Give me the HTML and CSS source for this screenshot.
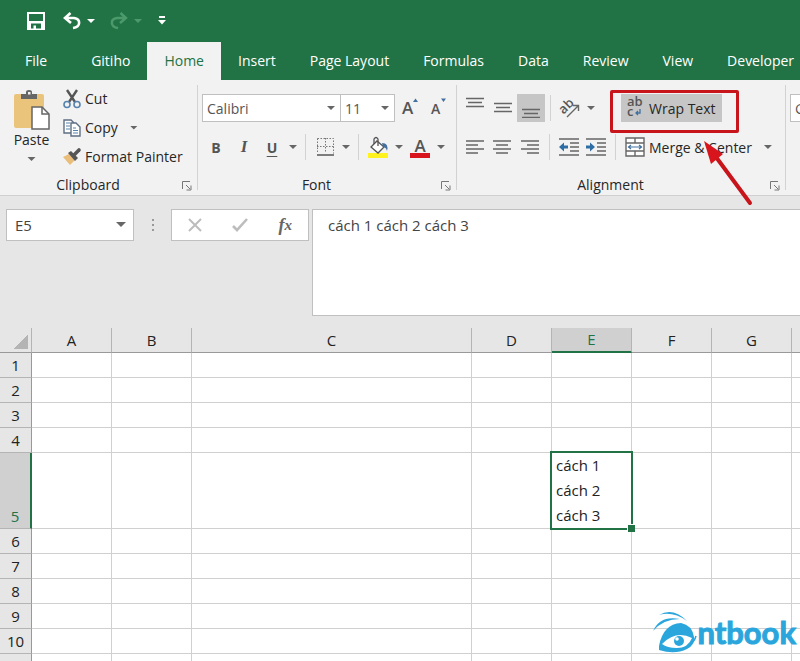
FILE: index.html
```html
<!DOCTYPE html>
<html lang="vi">
<head>
    <meta charset="UTF-8">
    <meta name="viewport" content="width=device-width, initial-scale=1.0">
    <title>Wrap Text</title>
    <link rel="stylesheet" href="styles.css">
</head>
<body>
    <div class="app">
        <header class="header">
            <div class="quick-access">
                <button class="qa-btn" aria-label="Save">
                    <svg width="18" height="18" viewBox="0 0 18 18"><path d="M0 0h18v18H0zM2 2v7h14V2zM4 11.500v5h2.500v-3H9v3h5v-5z" fill="#fff" fill-rule="evenodd"/></svg>
                </button>
                <button class="qa-btn undo" aria-label="Undo">
                    <svg width="18" height="18" viewBox="0 0 18 18"><path d="M7.500 1L2 6l6 5M2 6h9c7 1 7 9-1 10" fill="none" stroke="#fff" stroke-width="2.600"/></svg>
                </button>
                <span class="arrow light"></span>
                <button class="qa-btn redo" aria-label="Redo">
                    <svg width="18" height="18" viewBox="0 0 18 18"><path d="M10.500 1L16 6l-6 5M16 6H7C0 7 0 15 8 16" fill="none" stroke="#4c9a6c" stroke-width="2.400"/></svg>
                </button>
                <span class="arrow faded"></span>
                <button class="qa-btn more" aria-label="Customize">
                    <svg width="8" height="10" viewBox="0 0 8 10"><path d="M1 0h6v2H1zM0 4h8L4 8.500z" fill="#fff"/></svg>
                </button>
            </div>
            <nav class="tabs">
                <a href="#" class="tab file">File</a>
                <a href="#" class="tab">Gitiho</a>
                <a href="#" class="tab active">Home</a>
                <a href="#" class="tab">Insert</a>
                <a href="#" class="tab">Page Layout</a>
                <a href="#" class="tab">Formulas</a>
                <a href="#" class="tab">Data</a>
                <a href="#" class="tab">Review</a>
                <a href="#" class="tab">View</a>
                <a href="#" class="tab">Developer</a>
            </nav>
        </header>

        <div class="ribbon">
            <section class="group clipboard">
                <div class="clipboard-tools">
                    <button class="paste">
                        <svg width="36" height="40" viewBox="0 0 36 40">
                            <rect x="0" y="4" width="30" height="34" rx="2" fill="#ebc47c"/>
                            <path d="M7 4h5V2q0-2 3-2t3 2v2h5v5H7z" fill="#666"/><rect x="14" y="2" width="2.500" height="2.500" fill="#f2f2f2"/>
                            <path d="M18 17h10l7 7v15H18z" fill="#fff" stroke="#666" stroke-width="1.500"/><path d="M28 17v7h7" fill="none" stroke="#666" stroke-width="1.500"/>
                        </svg>
                        <span>Paste</span>
                        <span class="arrow"></span>
                    </button>
                    <div class="clipboard-list">
                        <button class="text-btn">
                            <svg width="18" height="20" viewBox="0 0 18 20"><path d="M4 1l8 12M14 1L6 13" stroke="#555" stroke-width="2.400" fill="none"/><g fill="none" stroke="#5682b0" stroke-width="1.600"><circle cx="4" cy="15.500" r="3"/><circle cx="14" cy="15.500" r="3"/></g></svg>
                            Cut
                        </button>
                        <button class="text-btn">
                            <svg width="18" height="20" viewBox="0 0 18 20"><g fill="#fff" stroke="#5f6f82" stroke-width="1.400"><path d="M9 15H1V2h7l3 3"/><path d="M8 5h5l4 4v9H8z"/></g><path d="M3 5h4M3 8h4M3 11h4M10 10h3M10 12.500h5M10 15h5" stroke="#5682b0" stroke-width="1.200"/></svg>
                            Copy
                            <span class="arrow"></span>
                        </button>
                        <button class="text-btn">
                            <svg width="18" height="20" viewBox="0 0 18 20"><path d="M0 10l6-3 6 6-5 5z" fill="#ebbd7b"/><path d="M5 6l3-2 7 7-3 3z" fill="#555"/><path d="M11 8l5-5" stroke="#555" stroke-width="3.600" stroke-linecap="round"/></svg>
                            Format Painter
                        </button>
                    </div>
                </div>
                <div class="group-label">Clipboard<button class="launcher" aria-label="Clipboard settings"><svg width="10" height="10" viewBox="0 0 10 10"><path d="M.5 8V.5H8M4 4l4 4M9 4.500V9H4.500" fill="none" stroke="#777"/></svg></button></div>
            </section>

            <section class="group font">
                <div class="tools">
                    <div class="tool-row">
                        <span class="combo family"><select aria-label="Font"><option>Calibri</option></select></span>
                        <span class="combo size"><select aria-label="Font size"><option>11</option></select></span>
                        <button class="icon-btn" aria-label="Increase font size"><svg width="18" height="20" viewBox="0 0 18 20"><text x="2" y="16" class="glyph big">A</text><path d="M13 4l2.500-3.500L18 4z" fill="#40709f"/></svg></button>
                        <button class="icon-btn" aria-label="Decrease font size"><svg width="18" height="20" viewBox="0 0 18 20"><text x="3" y="16" class="glyph small">A</text><path d="M13 .5h5L15.500 4z" fill="#40709f"/></svg></button>
                    </div>
                    <div class="tool-row">
                        <button class="icon-btn bold">B</button>
                        <button class="icon-btn italic">I</button>
                        <button class="icon-btn underline">U</button>
                        <span class="arrow"></span>
                        <span class="sep"></span>
                        <button class="icon-btn" aria-label="Borders"><svg width="17" height="18" viewBox="0 0 17 18"><path d="M.5 .5h16v15M.5 .5v15M8.500 0v15M0 8.500h17" fill="none" stroke="#777" stroke-dasharray="1.500 1.500"/><path d="M0 17h17" stroke="#555" stroke-width="1.500"/></svg></button>
                        <span class="arrow"></span>
                        <span class="sep"></span>
                        <button class="icon-btn" aria-label="Fill color"><svg width="20" height="21" viewBox="0 0 20 21"><rect y="16" width="20" height="5" fill="#fff21f"/><path d="M9 4l7 6-6 6-7-6z" fill="#fff" stroke="#555" stroke-width="1.300"/><path d="M6 7V2q2-3 4 0v7" fill="none" stroke="#555" stroke-width="1.300"/><path d="M14 6q7 0 5 8-1-4-4-4z" fill="#40709f"/></svg></button>
                        <span class="arrow"></span>
                        <button class="icon-btn" aria-label="Font color"><svg width="20" height="21" viewBox="0 0 20 21"><rect y="16" width="20" height="5" fill="#d8141c"/><text x="10" y="15" class="glyph color">A</text></svg></button>
                        <span class="arrow"></span>
                    </div>
                </div>
                <div class="group-label">Font<button class="launcher" aria-label="Font settings"><svg width="10" height="10" viewBox="0 0 10 10"><path d="M.5 8V.5H8M4 4l4 4M9 4.500V9H4.500" fill="none" stroke="#777"/></svg></button></div>
            </section>

            <section class="group alignment">
                <div class="align-tools">
                    <div class="tools">
                        <div class="tool-row">
                            <button class="icon-btn" aria-label="Top align"><svg width="18" height="20" viewBox="0 0 18 20"><path d="M0 .5h18M2 4.500h14M0 8.500h18" stroke="#666" stroke-width="1.300"/></svg></button>
                            <button class="icon-btn" aria-label="Middle align"><svg width="18" height="20" viewBox="0 0 18 20"><path d="M0 5.500h18M2 9.500h14M0 13.500h18" stroke="#666" stroke-width="1.300"/></svg></button>
                            <button class="icon-btn pressed" aria-label="Bottom align"><svg width="18" height="20" viewBox="0 0 18 20"><path d="M0 11.500h18M2 15.500h14M0 19.300h18" stroke="#666" stroke-width="1.300"/></svg></button>
                            <span class="sep"></span>
                            <button class="icon-btn" aria-label="Orientation"><svg width="22" height="22" viewBox="0 0 22 22"><text x="1" y="15" transform="rotate(-45 6 12)" class="glyph angled">ab</text><path d="M8 20L19 9M14 8.500h5.500V14" fill="none" stroke="#666" stroke-width="1.400"/></svg></button>
                            <span class="arrow"></span>
                        </div>
                        <div class="tool-row">
                            <button class="icon-btn" aria-label="Align left"><svg width="18" height="14" viewBox="0 0 18 14"><path d="M0 1h18M0 5h12M0 9h18M0 13h12" stroke="#666" stroke-width="1.300"/></svg></button>
                            <button class="icon-btn" aria-label="Center"><svg width="18" height="14" viewBox="0 0 18 14"><path d="M0 1h18M3 5h12M0 9h18M3 13h12" stroke="#666" stroke-width="1.300"/></svg></button>
                            <button class="icon-btn" aria-label="Align right"><svg width="18" height="14" viewBox="0 0 18 14"><path d="M0 1h18M6 5h12M0 9h18M6 13h12" stroke="#666" stroke-width="1.300"/></svg></button>
                            <span class="sep"></span>
                            <button class="icon-btn" aria-label="Decrease indent"><svg width="20" height="18" viewBox="0 0 20 18"><path d="M0 1h20M11 5h9M11 9h9M11 13h9M0 17h20" stroke="#666" stroke-width="1.300"/><path d="M0 9l5-4.500V7.500h4v3H5v3z" fill="#2e6da4"/></svg></button>
                            <button class="icon-btn" aria-label="Increase indent"><svg width="20" height="18" viewBox="0 0 20 18"><path d="M0 1h20M11 5h9M11 9h9M11 13h9M0 17h20" stroke="#666" stroke-width="1.300"/><path d="M9 9L4 4.500V7.500H0v3h4v3z" fill="#2e6da4"/></svg></button>
                            <span class="sep"></span>
                        </div>
                    </div>
                    <div class="tools">
                        <div class="tool-row wrap">
                            <button class="text-btn pressed">
                                <svg width="20" height="22" viewBox="0 0 20 22"><text x="2" y="9" class="glyph wrap-ab">ab</text><text x="2" y="19" class="glyph wrap-ab">c</text><path d="M15 12v4h-4M13 14l-2 2 2 2" fill="none" stroke="#40709f" stroke-width="1.300"/></svg>
                                Wrap Text
                            </button>
                            <span class="highlight"></span>
                            <svg class="pointer" width="52" height="68" viewBox="0 0 52 68"><path d="M48 63L14 17" stroke="#c8141b" stroke-width="4" stroke-linecap="round"/><path d="M2 1l19 13-12 10z" fill="#d8141c"/></svg>
                        </div>
                        <div class="tool-row">
                            <button class="text-btn">
                                <svg width="20" height="20" viewBox="0 0 20 20"><path d="M1 1h18v18H1zM1 6h18M1 14h18M10 1v5M10 14v5" fill="#fff" stroke="#666" stroke-width="1.400"/><path d="M3 10h14M6 8l-2.500 2L6 12M14 8l2.500 2L14 12" fill="none" stroke="#40709f" stroke-width="1.200"/></svg>
                                Merge &amp; Center
                                <span class="arrow"></span>
                            </button>
                        </div>
                    </div>
                </div>
                <div class="group-label">Alignment<button class="launcher" aria-label="Alignment settings"><svg width="10" height="10" viewBox="0 0 10 10"><path d="M.5 8V.5H8M4 4l4 4M9 4.500V9H4.500" fill="none" stroke="#777"/></svg></button></div>
            </section>

            <section class="group number">
                <span class="combo family"><select aria-label="Number format"><option>General</option></select></span>
            </section>
        </div>

        <div class="formula-bar">
            <label class="name-box"><input type="text" value="E5" aria-label="Name box"></label>
            <span class="dots"><i></i><i></i><i></i></span>
            <div class="formula-buttons">
                <button aria-label="Cancel"><svg width="14" height="14" viewBox="0 0 14 14"><path d="M1 1l12 12M13 1L1 13" stroke="#bdbdbd" stroke-width="2"/></svg></button>
                <button aria-label="Enter"><svg width="16" height="14" viewBox="0 0 16 14"><path d="M1 8l4 4L15 1" fill="none" stroke="#bdbdbd" stroke-width="2.600"/></svg></button>
                <button class="fx" aria-label="Insert function">f<sub>x</sub></button>
            </div>
            <textarea class="formula" aria-label="Formula">cách 1 cách 2 cách 3</textarea>
        </div>

        <main class="sheet">
            <table>
                <colgroup><col class="row-col"><col><col><col class="wide"><col><col><col><col><col></colgroup>
                <thead>
                    <tr><th class="corner"></th><th>A</th><th>B</th><th>C</th><th>D</th><th class="selected">E</th><th>F</th><th>G</th><th>H</th></tr>
                </thead>
                <tbody>
                    <tr><th>1</th><td></td><td></td><td></td><td></td><td></td><td></td><td></td><td></td></tr>
                    <tr><th>2</th><td></td><td></td><td></td><td></td><td></td><td></td><td></td><td></td></tr>
                    <tr><th>3</th><td></td><td></td><td></td><td></td><td></td><td></td><td></td><td></td></tr>
                    <tr><th>4</th><td></td><td></td><td></td><td></td><td></td><td></td><td></td><td></td></tr>
                    <tr><th class="selected">5</th><td></td><td></td><td></td><td></td><td class="active-cell">cách 1<br>cách 2<br>cách 3</td><td></td><td></td><td></td></tr>
                    <tr><th>6</th><td></td><td></td><td></td><td></td><td></td><td></td><td></td><td></td></tr>
                    <tr><th>7</th><td></td><td></td><td></td><td></td><td></td><td></td><td></td><td></td></tr>
                    <tr><th>8</th><td></td><td></td><td></td><td></td><td></td><td></td><td></td><td></td></tr>
                    <tr><th>9</th><td></td><td></td><td></td><td></td><td></td><td></td><td></td><td></td></tr>
                    <tr><th>10</th><td></td><td></td><td></td><td></td><td></td><td></td><td></td><td></td></tr>
                    <tr><th></th><td></td><td></td><td></td><td></td><td></td><td></td><td></td><td></td></tr>
                </tbody>
            </table>
            <div class="logo">
                <svg width="44" height="44" viewBox="0 0 44 44">
                    <path d="M6 5Q20-3 34 11Q20 1 6 5zM0 21Q7 5 27 9Q10 9 0 21z" fill="#2ba6dc"/>
                    <path d="M6 36Q10 14 28 13Q39 15 41 27Q42 35 34 39Q22 45 6 40z" fill="#2ba6dc"/>
                    <path d="M9 34Q23 20 39 28Q35 38 24 38Q14 38 9 34z" fill="#fff"/>
                    <circle cx="26" cy="31" r="5" fill="#2ba6dc"/><circle cx="24" cy="29" r="1.800" fill="#fff"/>
                    <path d="M24 40Q40 37 43 26" fill="none" stroke="#2ba6dc" stroke-width="1.500"/>
                </svg>
                <span>ntbook</span>
            </div>
        </main>
    </div>
</body>
</html>
```

FILE: styles.css
```css
* {
    box-sizing: border-box;
}
body {
    margin: 0;
    font-family: "Open Sans", "Noto Sans", sans-serif;
    font-size: 14px;
    color: #262626;
    background: #e6e6e6;
}
button, input, select, textarea {
    font: inherit;
    color: inherit;
    margin: 0;
    padding: 0;
    border: none;
    background: none;
}
svg {
    display: block;
    flex: none;
    overflow: visible;
}
.app {
    height: 100vh;
    overflow: hidden;
    display: flex;
    flex-direction: column;
}

/* title bar and tabs */
.header {
    flex: none;
    background: #217346;
}
.quick-access {
    display: flex;
    align-items: center;
    height: 42px;
    padding-left: 27px;
}
.undo {
    margin-left: 18px;
}
.redo {
    margin-left: 12px;
}
.qa-btn + .arrow {
    margin-left: 3px;
}
.more {
    margin-left: 13px;
}
.tabs {
    display: flex;
    height: 38px;
    white-space: nowrap;
}
.tab {
    padding: 0 17px;
    line-height: 37px;
    color: #fff;
    text-decoration: none;
}
.tab.file {
    padding: 0 27px 0 25px;
}
.tab.active {
    background: #f2f2f2;
    color: #217346;
}
.arrow {
    flex: none;
    width: 14px;
    height: 4px;
    background: #666;
    clip-path: polygon(3px 0, 11px 0, 7px 4px);
}
.arrow.light {
    background: #fff;
}
.arrow.faded {
    background: #4c9a6c;
}

/* ribbon */
.ribbon {
    flex: none;
    display: flex;
    height: 116px;
    background: #f2f2f2;
    border-bottom: 1px solid #d0d0d0;
}
.group {
    position: relative;
    flex: none;
    display: flex;
    flex-direction: column;
    justify-content: space-between;
    padding: 14px 4px 0;
}
.group::after {
    content: "";
    position: absolute;
    right: 0;
    top: 5px;
    bottom: 5px;
    width: 1px;
    background: #d2d2d2;
}
.clipboard {
    width: 198px;
    padding-top: 4px;
}
.font {
    width: 259px;
}
.alignment {
    width: 329px;
}
.group-label {
    display: flex;
    justify-content: center;
    position: relative;
    padding-right: 22px;
    line-height: 20px;
}
.launcher {
    position: absolute;
    right: 2px;
    top: 6px;
}
.clipboard-tools, .align-tools {
    display: flex;
}
.paste {
    display: flex;
    flex-direction: column;
    align-items: center;
    width: 55px;
    padding-top: 6px;
}
.paste span:last-child {
    margin-top: 8px;
}
.clipboard-list .text-btn {
    height: 29px;
}
.tools {
    display: flex;
    flex-direction: column;
    gap: 11px;
}
.tool-row {
    display: flex;
    align-items: center;
    height: 28px;
}
.text-btn {
    display: flex;
    align-items: center;
    gap: 4px;
    height: 28px;
    padding: 0 6px 0 4px;
    white-space: nowrap;
}
.text-btn .arrow {
    margin-left: 5px;
}
.icon-btn {
    display: flex;
    align-items: center;
    justify-content: center;
    width: 28px;
    height: 28px;
    color: #555;
}
.pressed {
    background: #c6c6c6;
}
.sep {
    width: 1px;
    height: 26px;
    margin: 0 5px;
    background: #d2d2d2;
}
.align-tools .tools:first-child {
    width: 160px;
}
.bold {
    font-weight: 700;
}
.italic {
    font-family: "Liberation Serif", serif;
    font-size: 17px;
    font-weight: 700;
    font-style: italic;
}
.underline {
    font-weight: 700;
    text-decoration: underline;
    text-underline-offset: 3px;
}
.glyph {
    fill: #555;
    font-weight: 600;
}
.glyph.big {
    font-size: 17px;
}
.glyph.small {
    font-size: 14px;
}
.glyph.color {
    font-size: 17px;
    text-anchor: middle;
}
.glyph.angled, .glyph.wrap-ab {
    font-size: 13px;
}
.combo {
    position: relative;
    height: 28px;
    background: #fff;
    border: 1px solid #c0c0c0;
}
.combo.family {
    width: 139px;
}
.combo.size {
    width: 54px;
    border-left: none;
}
.combo select {
    width: 100%;
    height: 26px;
    padding-left: 4px;
    appearance: none;
    color: #555;
}
.combo::after, .name-box::after {
    content: "";
    position: absolute;
    right: 5px;
    top: 11px;
    border: 4px solid transparent;
    border-top-color: #666;
    border-bottom: none;
}

/* red frame and arrow over Wrap Text */
.wrap {
    position: relative;
}
.highlight {
    position: absolute;
    left: -11px;
    top: -4px;
    width: 129px;
    height: 43px;
    border: 3px solid #c8141b;
    border-radius: 2px;
    pointer-events: none;
}
.pointer {
    position: absolute;
    left: 81px;
    top: 46px;
    z-index: 2;
    pointer-events: none;
}

/* formula bar */
.formula-bar {
    flex: none;
    display: flex;
    align-items: flex-start;
    padding: 13px 0 12px 6px;
    font-size: 15px;
    color: #444;
}
.name-box {
    position: relative;
    width: 128px;
    height: 32px;
    background: #fff;
    border: 1px solid #c0c0c0;
}
.name-box input {
    width: 100%;
    height: 30px;
    padding-left: 8px;
}
.name-box::after {
    right: 7px;
    top: 12px;
    border-width: 5px;
    border-bottom: none;
}
.dots {
    display: flex;
    flex-direction: column;
    align-items: center;
    justify-content: center;
    gap: 3px;
    width: 37px;
    height: 32px;
}
.dots i {
    width: 2px;
    height: 2px;
    background: #999;
}
.formula-buttons {
    display: flex;
    width: 138px;
    height: 32px;
    background: #fff;
    border: 1px solid #c0c0c0;
}
.formula-buttons button {
    flex: 1;
    display: flex;
    align-items: center;
    justify-content: center;
}
.fx {
    font-family: "Liberation Serif", serif;
    font-size: 18px;
    font-style: italic;
    font-weight: 700;
    color: #666;
}
.fx sub {
    font-size: 15px;
}
.formula {
    flex: 1;
    height: 107px;
    margin-left: 3px;
    padding: 5px 15px;
    line-height: 20px;
    resize: none;
    background: #fff;
    border: 1px solid #c0c0c0;
    border-right: none;
}

/* worksheet */
.sheet {
    position: relative;
    flex: 1;
    overflow: hidden;
    background: #fff;
}
table {
    width: 872px;
    table-layout: fixed;
    border-spacing: 0;
    font-size: 15px;
    color: #222;
}
col {
    width: 80px;
}
.row-col {
    width: 32px;
}
.wide {
    width: 280px;
}
th, td {
    height: 25px;
    padding: 0;
    line-height: 24px;
    border-right: 1px solid #d0d0d0;
    border-bottom: 1px solid #d0d0d0;
}
th {
    background: #e6e6e6;
    font-weight: 400;
    vertical-align: bottom;
    border-color: #b4b4b4;
}
thead th {
    border-bottom-color: #999;
}
tbody th {
    border-right-color: #999;
}
th.selected {
    background: #d0d0d0;
    color: #217346;
}
thead .selected {
    border-bottom: 2px solid #217346;
    line-height: 23px;
}
tbody .selected {
    border-right: 2px solid #217346;
}
.corner {
    background: linear-gradient(135deg, transparent 50%, #b4b4b4 50%) 14px 7px / 14px 14px no-repeat #e6e6e6;
}
.active-cell {
    position: relative;
    padding-left: 4px;
    line-height: 25px;
}
.active-cell::before {
    content: "";
    position: absolute;
    inset: -2px;
    border: 2px solid #217346;
}
.active-cell::after {
    content: "";
    position: absolute;
    right: -4px;
    bottom: -4px;
    width: 7px;
    height: 7px;
    background: #217346;
    border: 1px solid #fff;
    border-right: none;
    border-bottom: none;
}
.logo {
    position: absolute;
    right: 4px;
    bottom: 7px;
    display: flex;
    align-items: center;
    color: #2ba6dc;
    font: 700 31px/44px Lato, sans-serif;
    -webkit-text-stroke: 1px #2ba6dc;
}
```
